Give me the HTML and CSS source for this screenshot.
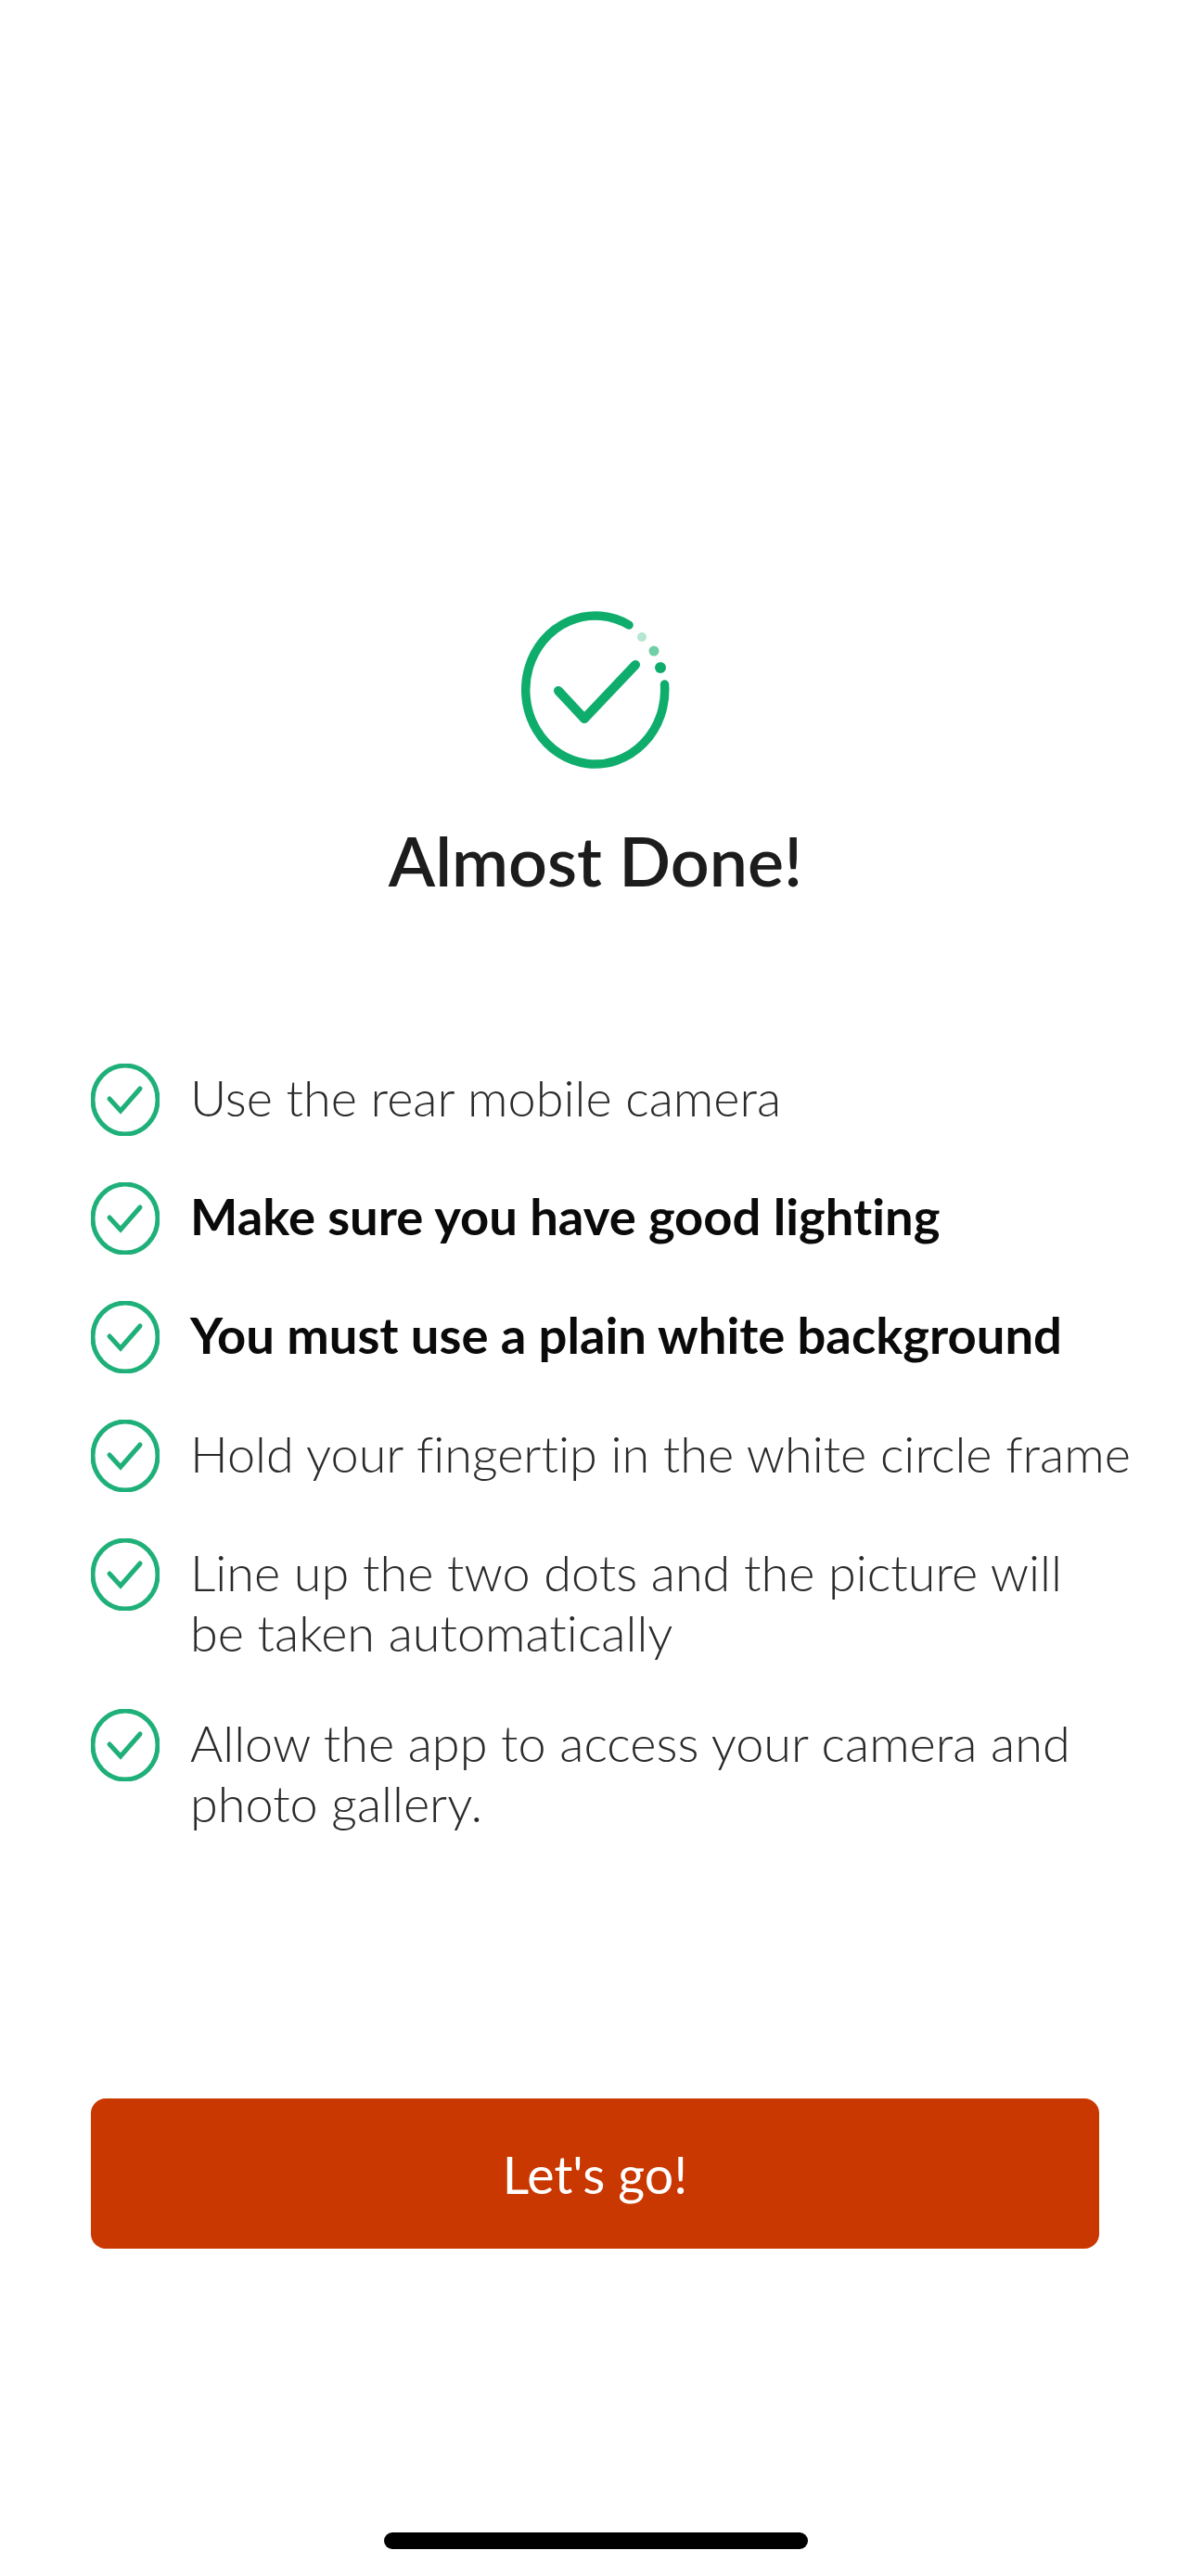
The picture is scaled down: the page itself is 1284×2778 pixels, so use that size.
FILE: index.html
```html
<!DOCTYPE html>
<html lang="en">
<head>
    <meta charset="UTF-8">
    <title>Almost Done!</title>
    <link rel="stylesheet" href="styles.css">
</head>
<body>
    <div class="screen">
        <svg class="hero-icon" width="168" height="178" viewBox="0 0 168 178" fill="none" stroke="#0fad6c" stroke-linecap="round">
            <path d="M120 19A75 80 0 1 0 158.500 83" stroke-width="9.500"/>
            <path d="M44 90L72 120L127 62" stroke-width="10" stroke-linejoin="round"/>
            <circle cx="134" cy="32" r="5" fill="#b4e6d0" stroke="none"/>
            <circle cx="147" cy="47" r="5.500" fill="#6fd0a8" stroke="none"/>
            <circle cx="154" cy="65" r="6" fill="#0fad6c" stroke="none"/>
        </svg>
        <h1 class="title">Almost Done!</h1>

        <ul class="tips">
            <li class="tip">
                <svg class="tip-icon" viewBox="0 0 74 78"><ellipse cx="37" cy="39" rx="35" ry="37"/><path d="M20 38L32 51L53 27"/></svg>
                <span class="tip-text">Use the rear mobile camera</span>
            </li>
            <li class="tip">
                <svg class="tip-icon" viewBox="0 0 74 78"><ellipse cx="37" cy="39" rx="35" ry="37"/><path d="M20 38L32 51L53 27"/></svg>
                <span class="tip-text bold">Make sure you have good lighting</span>
            </li>
            <li class="tip">
                <svg class="tip-icon" viewBox="0 0 74 78"><ellipse cx="37" cy="39" rx="35" ry="37"/><path d="M20 38L32 51L53 27"/></svg>
                <span class="tip-text bold">You must use a plain white background</span>
            </li>
            <li class="tip">
                <svg class="tip-icon" viewBox="0 0 74 78"><ellipse cx="37" cy="39" rx="35" ry="37"/><path d="M20 38L32 51L53 27"/></svg>
                <span class="tip-text">Hold your fingertip in the white circle frame</span>
            </li>
            <li class="tip">
                <svg class="tip-icon" viewBox="0 0 74 78"><ellipse cx="37" cy="39" rx="35" ry="37"/><path d="M20 38L32 51L53 27"/></svg>
                <span class="tip-text">Line up the two dots and the picture will<br>be taken automatically</span>
            </li>
            <li class="tip">
                <svg class="tip-icon" viewBox="0 0 74 78"><ellipse cx="37" cy="39" rx="35" ry="37"/><path d="M20 38L32 51L53 27"/></svg>
                <span class="tip-text">Allow the app to access your camera and<br>photo gallery.</span>
            </li>
        </ul>

        <button class="go-button">Let's go!</button>
        <div class="home-bar"></div>
    </div>
</body>
</html>
```

FILE: styles.css
```css
body {
    margin: 0;
    background-color: #fff;
    font-family: Lato, "Open Sans", sans-serif;
    font-variant-ligatures: none;
}
.screen {
    height: 2778px;
    box-sizing: border-box;
    padding: 655px 98px 29px;
    display: flex;
    flex-direction: column;
    overflow: hidden;
}
.hero-icon {
    align-self: center;
    flex-shrink: 0;
}
.title {
    margin: 50px 0 0;
    text-align: center;
    font-size: 73.500px;
    line-height: 90px;
    font-weight: 600;
    color: #1c1c1c;
}
.tips {
    list-style: none;
    margin: 174px 0 0;
    padding: 0;
    display: flex;
    flex-direction: column;
    gap: 54px;
}
.tip {
    display: flex;
    align-items: flex-start;
    gap: 33px;
    white-space: nowrap;
}
.tip-icon {
    width: 74px;
    height: 78px;
    margin-bottom: -4px;
    flex-shrink: 0;
    fill: none;
    stroke: #1fb079;
    stroke-width: 5;
    stroke-linecap: round;
}
.tip-text {
    margin: 4px 0 -4px;
    font-size: 54px;
    line-height: 65px;
    font-weight: 300;
    color: #2a2a2a;
}
.bold {
    font-size: 54.400px;
    font-weight: 700;
    color: #0a0a0a;
}
.go-button {
    margin-top: auto;
    height: 162px;
    flex-shrink: 0;
    width: 1087px;
    border: none;
    border-radius: 16px;
    background-color: #c93800;
    color: #fff;
    font-family: inherit;
    font-size: 55.500px;
    font-weight: 400;
}
.home-bar {
    align-self: center;
    width: 457px;
    height: 18px;
    margin-top: 306px;
    border-radius: 9px;
    background-color: #000;
}
```
